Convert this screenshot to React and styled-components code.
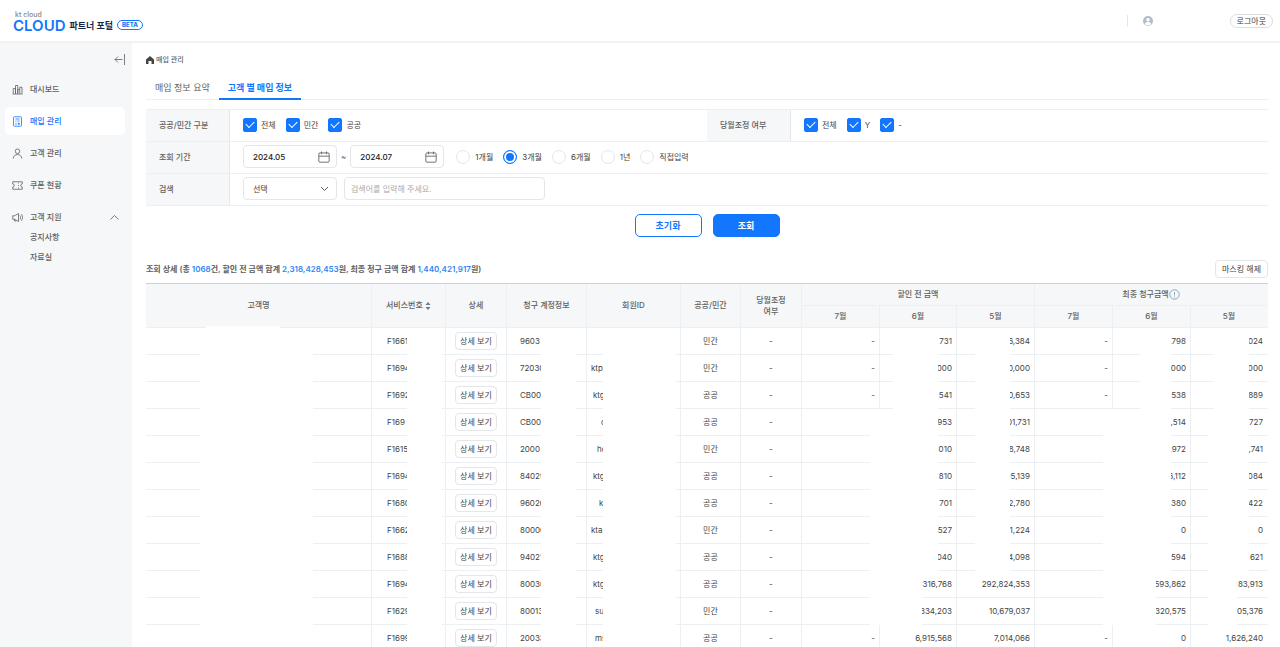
import React, { useState } from 'react';
import styled, { createGlobalStyle, ThemeProvider } from 'styled-components';

const theme = {
    primary: '#1276ff',
    link: '#2f86f6',
    navy: '#14284b',
    text: '#606060',
    dark: '#444444',
    grey1: '#f5f7f9',
    grey2: '#edf0f3',
    grey3: '#e3e6ea',
    white: '#ffffff',
};

const GlobalStyle = createGlobalStyle`
    * {
        box-sizing: border-box;
    }
    body {
        margin: 0;
        background: #ffffff;
        color: #606060;
        font-family: Inter, 'Noto Sans CJK KR', sans-serif;
        font-size: 8px;
        line-height: 12px;
    }
    button, input, select {
        font: inherit;
        color: inherit;
        margin: 0;
    }
    button {
        cursor: pointer;
    }
    a {
        color: inherit;
        text-decoration: none;
    }
`

const Page = styled.div`
    display: flex;
    flex-direction: column;
    height: 100vh;
`
const Header = styled.header`
    display: flex;
    align-items: center;
    flex: none;
    height: 43px;
    padding: 0 7px 0 13px;
    border-bottom: 2px solid #f1f2f3;
`
const Brand = styled.a`
    display: flex;
    align-items: flex-end;
    gap: 4px;
    margin-top: 2px;
`
const Logo = styled.span`
    display: flex;
    flex-direction: column;
    color: ${(props) => props.theme.primary};
    font-size: 15px;
    font-weight: 600;
    line-height: 13px;
`
const LogoTop = styled.span`
    padding-left: 2px;
    color: #888888;
    font-size: 7px;
    font-weight: 500;
    line-height: 8px;
`
const BrandName = styled.span`
    color: ${(props) => props.theme.navy};
    font-size: 9px;
    font-weight: 700;
    line-height: 13px;
`
const Beta = styled.span`
    padding: 0 4px;
    margin-bottom: 2px;
    border: 1px solid ${(props) => props.theme.primary};
    border-radius: 5px;
    color: ${(props) => props.theme.primary};
    font-size: 6px;
    font-weight: 800;
    line-height: 8px;
`
const HeaderRight = styled.div`
    display: flex;
    align-items: center;
    margin-left: auto;
`
const Account = styled.div`
    display: flex;
    align-items: center;
    width: 103px;
    height: 12px;
    padding-left: 15px;
    border-left: 1px solid ${(props) => props.theme.grey3};
`
const Logout = styled.button`
    height: 14px;
    padding: 0 6px;
    border: 1px solid #dddddd;
    border-radius: 7px;
    background: ${(props) => props.theme.white};
    color: ${(props) => props.theme.dark};
    line-height: 12px;
`
const Body = styled.div`
    display: flex;
    flex: 1;
    min-height: 0;
`
const Sidebar = styled.nav`
    flex: none;
    width: 132px;
    padding: 11px 7px 0 5px;
    background: ${(props) => props.theme.grey1};
`
const Collapse = styled.button`
    display: block;
    margin: 0 0 7px auto;
    padding: 0;
    height: 14px;
    border: 0;
    background: none;
`
const Menu = styled.ul`
    display: flex;
    flex-direction: column;
    gap: 4px;
    margin: 0;
    padding: 0;
    list-style: none;
`
const MenuLink = styled.a`
    display: flex;
    align-items: center;
    gap: 7px;
    height: 28px;
    padding: 0 6px 0 7px;
    border-radius: 5px;
    font-weight: 500;
    background: ${(props) => props.$active ? props.theme.white : 'none'};
    color: ${(props) => props.$active ? props.theme.primary : props.theme.text};
    svg:last-child:not(:first-child) {
        margin-left: auto;
    }
`
const SubMenu = styled.ul`
    margin: -4px 0 0;
    padding: 0 0 0 25px;
    list-style: none;
    font-weight: 500;
    line-height: 20px;
`
const Main = styled.main`
    flex: 1;
    min-width: 0;
    padding: 10px 12px 0 14px;
    overflow-y: auto;
    scrollbar-width: none;
`
const Breadcrumb = styled.div`
    display: flex;
    align-items: center;
    gap: 2px;
    height: 14px;
    font-size: 7px;
    font-weight: 500;
`
const Tabs = styled.div`
    display: flex;
    height: 33px;
    border-bottom: 1px solid ${(props) => props.theme.grey2};
`
const Tab = styled.button`
    height: 33px;
    padding: 10px 9px 0;
    border: 0;
    border-bottom: 2px solid ${(props) => props.$active ? props.theme.primary : 'transparent'};
    background: none;
    color: ${(props) => props.$active ? props.theme.primary : props.theme.text};
    font-size: 9px;
    font-weight: ${(props) => props.$active ? 700 : 400};
`
const Filter = styled.form`
    margin: 9px 0 0;
`
const FilterBox = styled.div`
    border-top: 1px solid ${(props) => props.theme.grey2};
`
const FilterRow = styled.div`
    display: flex;
    height: 32px;
    border-bottom: 1px solid ${(props) => props.theme.grey2};
`
const FilterLabel = styled.div`
    display: flex;
    align-items: center;
    flex: none;
    width: 84px;
    padding: 0 0 2px 13px;
    border-right: 1px solid ${(props) => props.theme.grey3};
    background: ${(props) => props.theme.grey1};
    font-weight: 500;
`
const FilterField = styled.div`
    display: flex;
    align-items: center;
    flex: 1;
    gap: ${(props) => props.$gap || 10}px;
    padding: 0 0 2px 13px;
`
const Choice = styled.label`
    display: flex;
    align-items: center;
    gap: ${(props) => props.$gap || 4}px;
    color: ${(props) => props.theme.dark};
`
const Check = styled.input`
    display: grid;
    place-items: center;
    width: 14px;
    height: 14px;
    border: 1px solid ${(props) => props.theme.grey3};
    border-radius: 2px;
    appearance: none;
    &:checked {
        border-color: ${(props) => props.theme.primary};
        background: ${(props) => props.theme.primary};
    }
    &:checked::after {
        content: '';
        width: 7px;
        height: 4px;
        margin-bottom: 2px;
        border: solid #ffffff;
        border-width: 0 0 1px 1px;
        transform: rotate(-45deg);
    }
`
const Radio = styled.input`
    width: 14px;
    height: 14px;
    border: 1px solid ${(props) => props.theme.grey3};
    border-radius: 50%;
    appearance: none;
    &:checked {
        border-color: ${(props) => props.theme.primary};
        background: ${(props) => props.theme.primary};
        box-shadow: inset 0 0 0 2px #ffffff;
    }
`
const RadioGroup = styled.div`
    display: flex;
    gap: 10px;
    margin-left: 8px;
`
const Control = styled.div`
    position: relative;
    display: flex;
    align-items: center;
    width: ${(props) => props.$width || 94}px;
    height: 23px;
    border: 1px solid ${(props) => props.theme.grey3};
    border-radius: 4px;
    svg {
        position: absolute;
        right: 6px;
        pointer-events: none;
    }
`
const TextInput = styled.input`
    width: 100%;
    height: 100%;
    padding: 0 ${(props) => props.$pad || 9}px;
    border: 0;
    background: none;
    outline: none;
    color: #222222;
    font-weight: 500;
    &::placeholder {
        color: #aaaaaa;
        font-weight: 400;
    }
`
const Select = styled.select`
    width: 100%;
    height: 100%;
    padding: 0 9px;
    border: 0;
    background: none;
    outline: none;
    color: ${(props) => props.theme.dark};
    appearance: none;
`
const Actions = styled.div`
    display: flex;
    justify-content: center;
    gap: 11px;
    margin-top: 8px;
`
const ActionButton = styled.button`
    width: 67px;
    height: 23px;
    border: 1px solid ${(props) => props.theme.primary};
    border-radius: 5px;
    background: ${(props) => props.$fill ? props.theme.primary : props.theme.white};
    color: ${(props) => props.$fill ? props.theme.white : props.theme.primary};
    font-size: 9px;
    font-weight: 700;
`
const ListTop = styled.div`
    display: flex;
    align-items: center;
    justify-content: space-between;
    height: 18px;
    margin: 23px 0 5px;
`
const Summary = styled.p`
    margin: 0;
    font-weight: 600;
    b {
        color: ${(props) => props.theme.link};
        font-weight: 600;
    }
`
const SmallButton = styled.button`
    height: 18px;
    padding: 0 ${(props) => props.$pad || 6}px;
    border: 1px solid ${(props) => props.theme.grey3};
    border-radius: 4px;
    background: ${(props) => props.theme.white};
    color: ${(props) => props.theme.dark};
    line-height: 12px;
    white-space: nowrap;
`
const Table = styled.table`
    width: 100%;
    table-layout: fixed;
    border-collapse: separate;
    border-spacing: 0;
    border-top: 1px solid #ccd1d6;
`
const Col = styled.col`
    width: ${(props) => props.$width ? `${props.$width}px` : 'auto'};
`
const HeadCell = styled.th`
    position: relative;
    height: 22px;
    padding: 0;
    border-right: 1px solid ${(props) => props.theme.grey2};
    border-bottom: 1px solid ${(props) => props.theme.grey2};
    background: ${(props) => props.theme.grey1};
    font-weight: 500;
    line-height: 11px;
    svg {
        vertical-align: middle;
    }
    &.last {
        border-right-color: transparent;
    }
`
const Cell = styled.td`
    position: relative;
    height: 27px;
    padding: 0 ${(props) => props.$right || 0}px 0 ${(props) => props.$left || 0}px;
    border-right: 1px solid ${(props) => props.theme.grey2};
    border-bottom: 1px solid ${(props) => props.theme.grey2};
    color: ${(props) => props.theme.dark};
    text-align: ${(props) => props.$align || 'left'};
    white-space: nowrap;
    &:last-child {
        border-right-color: transparent;
    }
`
/* white block that hides part of a cell together with its bottom line */
const Mask = styled.span`
    position: absolute;
    top: 0;
    bottom: -1px;
    left: ${(props) => props.$from}px;
    right: ${(props) => props.$to}px;
    background: ${(props) => props.theme.white};
`
const HeadMask = styled.span`
    position: absolute;
    bottom: -1px;
    left: 60px;
    right: 91px;
    height: 2px;
    background: ${(props) => props.theme.white};
`

const Icon = ({ size = 11, children, ...rest }) => (
    <svg width={size} height={size} viewBox="0 0 22 22" fill="none" stroke="currentColor" strokeWidth="1.6" aria-hidden="true" {...rest}>
        {children}
    </svg>
);

const icons = {
    chart: (
        <Icon>
            <path d="M1 20h20M2.500 19.500V9h4.500v10.500M7 19.500V3h4.500v16.500M11.500 19.500V11h4M15.500 19.500V6.500H20v13" />
        </Icon>
    ),
    bill: (
        <Icon>
            <rect x="3" y="1.500" width="16" height="19" rx="2" />
            <path d="M7 6h8M7 10h2M11 10h4M7 14h2M12 14.500h3v2h-3zM7 17h2" />
        </Icon>
    ),
    user: (
        <Icon>
            <circle cx="11" cy="6.500" r="4.500" />
            <path d="M2.500 21c.5-5 3.500-8 8.500-8s8 3 8.500 8" />
        </Icon>
    ),
    coupon: (
        <Icon>
            <path d="M1.500 3.500h19v4.500a3 3 0 0 0 0 6v4.500h-19V14a3 3 0 0 0 0-6z" />
            <path d="M13 5v2M13 10v2M13 15v2" />
        </Icon>
    ),
    speaker: (
        <Icon>
            <path d="M1.500 7.500h3.500L13 3v16l-8-4.500H1.500zM5 14.500V18h3.500M16 7c1.500 2.500 1.500 5.500 0 8M19 4.500c2.500 4 2.500 9 0 13" />
        </Icon>
    ),
};

const MENU = [
    { icon: 'chart', label: '대시보드' },
    { icon: 'bill', label: '매입 관리', active: true },
    { icon: 'user', label: '고객 관리' },
    { icon: 'coupon', label: '쿠폰 현황' },
    { icon: 'speaker', label: '고객 지원', children: ['공지사항', '자료실'] },
];

const COLS = [null, 74, 61, 80, 94, 60, 61, 78, 77, 78, 78, 78, 77];

/* member: [id, left padding]; before / final: amounts for 7월, 6월, 5월 */
const ROWS = [
    { svc: 'F1661', acc: '9603', member: ['', 5], type: '민간', before: ['-', '731', '6,384'], final: ['-', ',798', '024'] },
    { svc: 'F1694', acc: '72030', member: ['ktp', 4], type: '민간', before: ['-', '000', '0,000'], final: ['-', '000', '000'] },
    { svc: 'F1692', acc: 'CB00', member: ['ktg', 6], type: '공공', before: ['-', '541', '0,653'], final: ['-', '538', '889'] },
    { svc: 'F169', acc: 'CB00', member: ['c', 14], type: '공공', before: ['', '953', '01,731'], final: ['', ',514', '727'] },
    { svc: 'F1615', acc: '2000', member: ['he', 10], type: '민간', before: ['', '010', '8,748'], final: ['', ',972', ',741'] },
    { svc: 'F1694', acc: '84029', member: ['ktg', 6], type: '공공', before: ['', '810', '95,139'], final: ['', '6,112', '084'] },
    { svc: 'F1680', acc: '96026', member: ['k', 12], type: '공공', before: ['', '701', '2,780'], final: ['', '380', '422'] },
    { svc: 'F1662', acc: '80000', member: ['kta', 4], type: '민간', before: ['', '527', '31,224'], final: ['', '0', '0'] },
    { svc: 'F1688', acc: '94021', member: ['ktg', 6], type: '공공', before: ['', '040', '4,098'], final: ['', '594', '621'] },
    { svc: 'F1694', acc: '80030', member: ['ktg', 6], type: '공공', before: ['', '316,768', '292,824,353'], final: ['', '593,862', '83,913'], wide: true },
    { svc: 'F1629', acc: '80013', member: ['su', 8], type: '민간', before: ['', '334,203', '10,679,037'], final: ['', '320,575', '05,376'], wide: true },
    { svc: 'F1699', acc: '20033', member: ['ms', 8], type: '공공', before: ['-', '6,915,568', '7,014,066'], final: ['-', '0', '1,626,240'], open: true },
];

/* hidden spans [left, right] of the six amount cells */
const amountMasks = (row) => {
    if (row.open) return [null, null, null, null, null, null];
    if (row.wide) return [[68, -1], [0, 34], null, [68, -1], [0, 34], [17, 30]];
    if (row.before[0] === '-') return [null, [13, 18], [18, 24], null, [27, 19], [23, 18]];
    return [[68, -1], [0, 18], [18, 24], [68, -1], [0, 19], [17, 18]];
};

const Checks = ({ name, labels }) => labels.map((label) => (
    <Choice key={label}>
        <Check type="checkbox" name={name} defaultChecked />
        {label}
    </Choice>
));

const DateInput = ({ label, value }) => (
    <Control>
        <TextInput type="text" aria-label={label} defaultValue={value} />
        <Icon size={12}>
            <rect x="1.500" y="3.500" width="19" height="17" rx="2" />
            <path d="M1.500 9.500h19M6.500 1v5M15.500 1v5" />
        </Icon>
    </Control>
);

const Side = () => (
    <Sidebar>
        <Collapse type="button" aria-label="메뉴 접기">
            <Icon><path d="M21 0v22M17 11H2M8 5l-6 6 6 6" /></Icon>
        </Collapse>
        <Menu>
            {MENU.map((item) => (
                <li key={item.label}>
                    <MenuLink href="#" $active={item.active}>
                        {icons[item.icon]}
                        {item.label}
                        {item.children && <Icon size={9}><path d="M1 16L11 6l10 10" strokeWidth="2" /></Icon>}
                    </MenuLink>
                    {item.children && (
                        <SubMenu>
                            {item.children.map((sub) => <li key={sub}><a href="#">{sub}</a></li>)}
                        </SubMenu>
                    )}
                </li>
            ))}
        </Menu>
    </Sidebar>
);

const SearchFilter = () => {
    const [period, setPeriod] = useState('3개월');
    return (
        <Filter onSubmit={(e) => e.preventDefault()}>
            <FilterBox>
                <FilterRow>
                    <FilterLabel>공공/민간 구분</FilterLabel>
                    <FilterField>
                        <Checks name="type" labels={['전체', '민간', '공공']} />
                    </FilterField>
                    <FilterLabel>당월조정 여부</FilterLabel>
                    <FilterField>
                        <Checks name="adjust" labels={['전체', 'Y', '-']} />
                    </FilterField>
                </FilterRow>
                <FilterRow>
                    <FilterLabel>조회 기간</FilterLabel>
                    <FilterField $gap={4}>
                        <DateInput label="시작 월" value="2024.05" />
                        ~
                        <DateInput label="종료 월" value="2024.07" />
                        <RadioGroup>
                            {['1개월', '3개월', '6개월', '1년', '직접입력'].map((label) => (
                                <Choice key={label} $gap={5}>
                                    <Radio
                                        type="radio"
                                        name="period"
                                        checked={period === label}
                                        onChange={() => setPeriod(label)}
                                    />
                                    {label}
                                </Choice>
                            ))}
                        </RadioGroup>
                    </FilterField>
                </FilterRow>
                <FilterRow>
                    <FilterLabel>검색</FilterLabel>
                    <FilterField $gap={7}>
                        <Control>
                            <Select aria-label="검색 항목">
                                <option>선택</option>
                            </Select>
                            <Icon size={11}><path d="M4 8l7 7 7-7" strokeWidth="2" /></Icon>
                        </Control>
                        <Control $width={201}>
                            <TextInput type="text" $pad={6} aria-label="검색어" placeholder="검색어를 입력해 주세요." />
                        </Control>
                    </FilterField>
                </FilterRow>
            </FilterBox>
            <Actions>
                <ActionButton type="reset">초기화</ActionButton>
                <ActionButton type="submit" $fill>조회</ActionButton>
            </Actions>
        </Filter>
    );
};

const Row = ({ row }) => {
    const masks = amountMasks(row);
    return (
        <tr>
            <Cell><Mask $from={54} $to={58} /></Cell>
            <Cell $left={15}>{row.svc}<Mask $from={35} $to={3} /></Cell>
            <Cell $align="center"><SmallButton type="button" $pad={4}>상세 보기</SmallButton></Cell>
            <Cell $left={13}>{row.acc}<Mask $from={34} $to={10} /></Cell>
            <Cell $left={row.member[1]}>{row.member[0]}<Mask $from={16} $to={4} /></Cell>
            <Cell $align="center">{row.type}</Cell>
            <Cell $align="center">-</Cell>
            {[...row.before, ...row.final].map((amount, i) => (
                <Cell key={i} $align="right" $right={4}>
                    {amount}
                    {masks[i] && <Mask $from={masks[i][0]} $to={masks[i][1]} />}
                </Cell>
            ))}
        </tr>
    );
};

const PurchaseTable = () => (
    <Table>
        <colgroup>
            {COLS.map((width, i) => <Col key={i} $width={width} />)}
        </colgroup>
        <thead>
            <tr>
                <HeadCell rowSpan={2}>고객명<HeadMask /></HeadCell>
                <HeadCell rowSpan={2}>
                    서비스번호{' '}
                    <svg width="6" height="8" viewBox="0 0 12 16" fill="#6b7a8c" aria-hidden="true">
                        <path d="M6 0l5 6H1zM6 16l5-6H1z" />
                    </svg>
                </HeadCell>
                <HeadCell rowSpan={2}>상세</HeadCell>
                <HeadCell rowSpan={2}>청구 계정정보</HeadCell>
                <HeadCell rowSpan={2}>회원ID</HeadCell>
                <HeadCell rowSpan={2}>공공/민간</HeadCell>
                <HeadCell rowSpan={2}>당월조정<br />여부</HeadCell>
                <HeadCell colSpan={3}>할인 전 금액</HeadCell>
                <HeadCell colSpan={3} className="last">
                    최종 청구금액
                    <Icon size={11} stroke="#7d93a8">
                        <circle cx="11" cy="11" r="9.500" />
                        <path d="M11 6v7M11 15v2" />
                    </Icon>
                </HeadCell>
            </tr>
            <tr>
                {['7월', '6월', '5월', '7월', '6월', '5월'].map((month, i) => (
                    <HeadCell key={i} className={i === 5 ? 'last' : undefined}>{month}</HeadCell>
                ))}
            </tr>
        </thead>
        <tbody>
            {ROWS.map((row, i) => <Row key={i} row={row} />)}
        </tbody>
    </Table>
);

const App = () => (
    <ThemeProvider theme={theme}>
        <GlobalStyle />
        <Page>
            <Header>
                <Brand href="#">
                    <Logo>
                        <LogoTop>kt cloud</LogoTop>
                        CLOUD
                    </Logo>
                    <BrandName>파트너 포털</BrandName>
                    <Beta>BETA</Beta>
                </Brand>
                <HeaderRight>
                    <Account>
                        <svg width="10" height="10" viewBox="0 0 20 20" aria-hidden="true">
                            <circle cx="10" cy="10" r="10" fill="#b4bcc6" />
                            <circle cx="10" cy="7.500" r="3.500" fill="#ffffff" />
                            <path d="M3.500 16c1-3 3.500-4 6.500-4s5.500 1 6.500 4c-3 3.500-10 3.500-13 0z" fill="#ffffff" />
                        </svg>
                    </Account>
                    <Logout type="button">로그아웃</Logout>
                </HeaderRight>
            </Header>
            <Body>
                <Side />
                <Main>
                    <Breadcrumb>
                        <svg width="8" height="8" viewBox="0 0 16 16" fill="#444444" aria-hidden="true">
                            <path d="M8 0l8 7v9h-5v-6H5v6H0V7z" />
                        </svg>
                        매입 관리
                    </Breadcrumb>
                    <Tabs>
                        <Tab type="button">매입 정보 요약</Tab>
                        <Tab type="button" $active>고객 별 매입 정보</Tab>
                    </Tabs>
                    <SearchFilter />
                    <ListTop>
                        <Summary>
                            조회 상세 (총 <b>1068</b>건, 할인 전 금액 합계 <b>2,318,428,453</b>원, 최종 청구 금액 합계 <b>1,440,421,917</b>원)
                        </Summary>
                        <SmallButton type="button">마스킹 해제</SmallButton>
                    </ListTop>
                    <PurchaseTable />
                </Main>
            </Body>
        </Page>
    </ThemeProvider>
);

export default App;
